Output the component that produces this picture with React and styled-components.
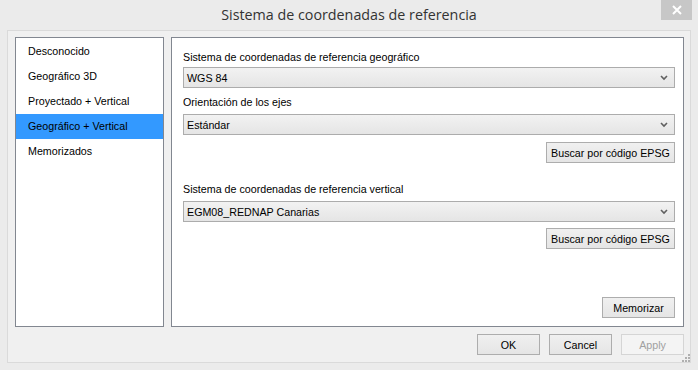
import React from "react";
import styled, { createGlobalStyle } from "styled-components";

const Global = createGlobalStyle`
  body {
    margin: 0;
    background: #ebebeb;
    font-family: "Liberation Sans", Arial, sans-serif;
  }
`;

const Window = styled.div`
  width: 698px;
  height: 370px;
  box-sizing: border-box;
  background: #ebebeb;
  display: flex;
  flex-direction: column;
  padding: 0 7px 7px 7px;
`;

const TitleBar = styled.div`
  height: 30px;
  position: relative;
  display: flex;
  align-items: center;
  justify-content: center;
  font-family: "Open Sans", "Noto Sans", sans-serif;
  font-size: 14.3px;
  color: #333;
  padding-bottom: 1px;
  box-sizing: border-box;
`;

const Close = styled.div`
  position: absolute;
  top: 0;
  right: -1px;
  width: 31px;
  height: 20px;
  background: #c7c7c7;
  display: flex;
  align-items: center;
  justify-content: center;
`;

const Client = styled.div`
  flex: 1;
  background: #f0f0f0;
  border: 1px solid #dadada;
  display: flex;
  flex-direction: column;
  padding: 6px 6px 0 7px;
  position: relative;
  font-size: 10.7px;
  color: #000;
`;

const Body = styled.div`
  display: flex;
  gap: 7px;
  height: 290px;
`;

const List = styled.div`
  width: 149px;
  box-sizing: border-box;
  background: #fff;
  border: 1px solid #828790;
  padding: 1px 0;
  display: flex;
  flex-direction: column;
`;

const Item = styled.div`
  height: 25px;
  line-height: 25px;
  padding-left: 12px;
  background: ${(p) => (p.$active ? "#3399ff" : "transparent")};
  color: #000;
`;

const Panel = styled.div`
  flex: 1;
  box-sizing: border-box;
  background: #fff;
  border: 1px solid #828790;
  padding: 11px 8px 8px 11px;
  display: flex;
  flex-direction: column;
`;

const Label = styled.div`
  height: 16px;
  line-height: 16px;
  margin-top: ${(p) => p.$mt || 0}px;
`;

const Combo = styled.div`
  height: 21px;
  box-sizing: border-box;
  border: 1px solid #acacac;
  background: linear-gradient(#f2f2f2, #e5e5e5);
  display: flex;
  align-items: center;
  justify-content: space-between;
  padding: 0 6px 0 3px;
  margin-top: ${(p) => p.$mt || 0}px;
`;

const Right = styled.div`
  display: flex;
  justify-content: flex-end;
  gap: 9px;
  margin-top: ${(p) => p.$mt || 0}px;
`;

const Button = styled.div`
  width: ${(p) => p.$w}px;
  height: 21px;
  box-sizing: border-box;
  border: 1px solid ${(p) => (p.$disabled ? "#d5d5d5" : "#adadad")};
  background: ${(p) =>
    p.$disabled ? "#f4f4f4" : "linear-gradient(#f0f0f0, #e5e5e5)"};
  color: ${(p) => (p.$disabled ? "#a0a0a0" : "#000")};
  display: flex;
  align-items: center;
  justify-content: center;
`;

const Spacer = styled.div`
  flex: 1;
`;

const Footer = styled.div`
  display: flex;
  justify-content: flex-end;
  gap: 9px;
  margin-top: 7px;
`;

const Grip = styled.svg`
  position: absolute;
  right: 0;
  bottom: 0;
`;

function Chevron() {
  return (
    <svg width="8" height="6" viewBox="0 0 8 6">
      <path d="M1 1 L4 4 L7 1" fill="none" stroke="#606060" strokeWidth="1.6" />
    </svg>
  );
}

export default function App() {
  return (
    <>
      <Global />
      <Window>
        <TitleBar>
          Sistema de coordenadas de referencia
          <Close>
            <svg width="10" height="10" viewBox="0 0 10 10">
              <path d="M1 1 L9 9 M9 1 L1 9" stroke="#fff" strokeWidth="2" />
            </svg>
          </Close>
        </TitleBar>
        <Client>
          <Body>
            <List>
              <Item>Desconocido</Item>
              <Item>Geográfico 3D</Item>
              <Item>Proyectado + Vertical</Item>
              <Item $active>Geográfico + Vertical</Item>
              <Item>Memorizados</Item>
            </List>
            <Panel>
              <Label>Sistema de coordenadas de referencia geográfico</Label>
              <Combo $mt={2}>
                WGS 84
                <Chevron />
              </Combo>
              <Label $mt={6}>Orientación de los ejes</Label>
              <Combo $mt={4}>
                Estándar
                <Chevron />
              </Combo>
              <Right $mt={7}>
                <Button $w={129}>Buscar por código EPSG</Button>
              </Right>
              <Label $mt={18}>Sistema de coordenadas de referencia vertical</Label>
              <Combo $mt={4}>
                EGM08_REDNAP Canarias
                <Chevron />
              </Combo>
              <Right $mt={6}>
                <Button $w={129}>Buscar por código EPSG</Button>
              </Right>
              <Spacer />
              <Right>
                <Button $w={73}>Memorizar</Button>
              </Right>
            </Panel>
          </Body>
          <Footer>
            <Button $w={63}>OK</Button>
            <Button $w={63}>Cancel</Button>
            <Button $w={63} $disabled>
              Apply
            </Button>
          </Footer>
          <Grip width="8" height="8" viewBox="0 0 8 8">
            <g fill="#b0b0b0">
              <rect x="6" y="0" width="2" height="2" />
              <rect x="3" y="3" width="2" height="2" />
              <rect x="6" y="3" width="2" height="2" />
              <rect x="0" y="6" width="2" height="2" />
              <rect x="3" y="6" width="2" height="2" />
              <rect x="6" y="6" width="2" height="2" />
            </g>
          </Grip>
        </Client>
      </Window>
    </>
  );
}
